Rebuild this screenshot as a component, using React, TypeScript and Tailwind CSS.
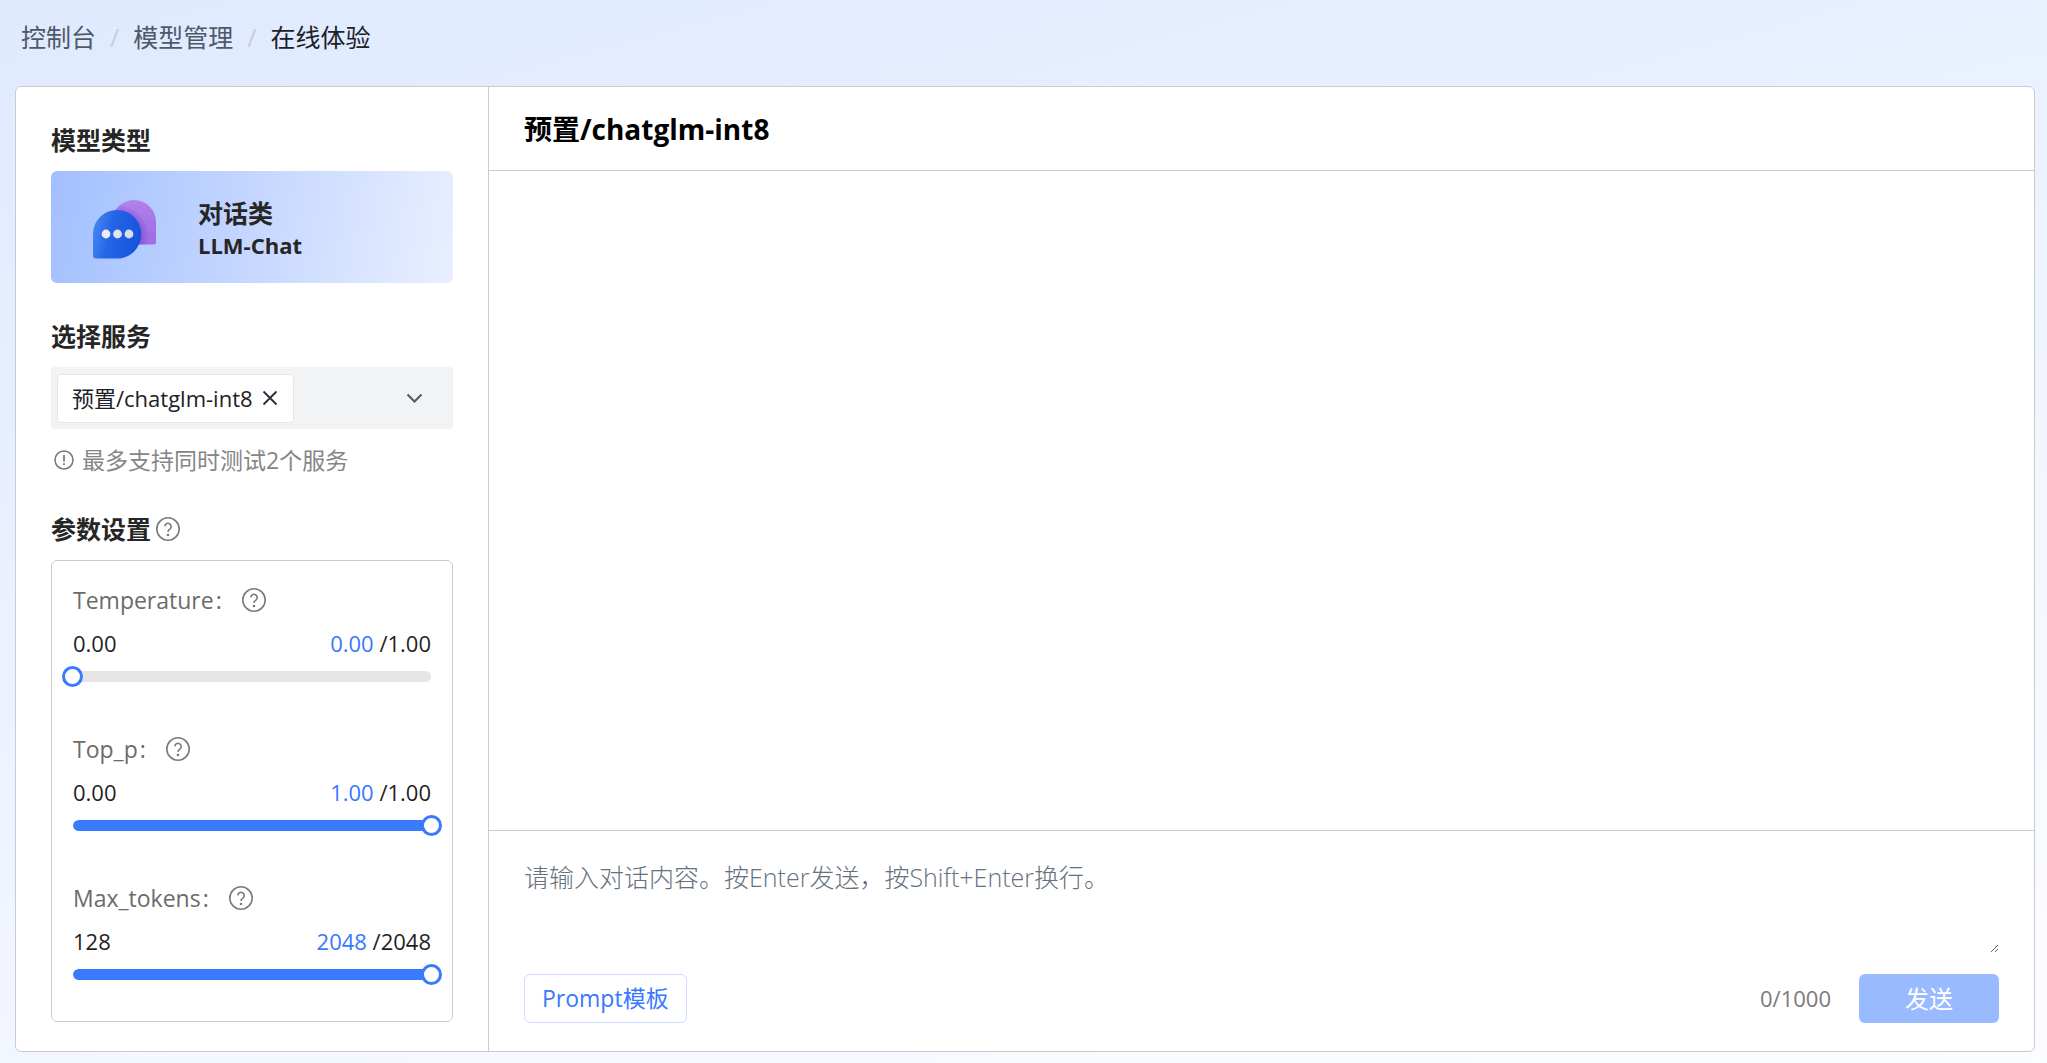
import { useState } from 'react';
import type { ReactNode } from 'react';

interface Param {
  id: string;
  label: string;
  min: number;
  max: number;
  step: number;
  digits: number;
  initial: number;
}

const params: Param[] = [
  { id: 'temperature', label: 'Temperature', min: 0, max: 1, step: 0.01, digits: 2, initial: 0 },
  { id: 'top_p', label: 'Top_p', min: 0, max: 1, step: 0.01, digits: 2, initial: 1 },
  { id: 'max_tokens', label: 'Max_tokens', min: 128, max: 2048, step: 1, digits: 0, initial: 2048 },
];

const MAX_LENGTH = 1000;

function HelpIcon() {
  return (
    <svg viewBox="0 0 24 24" className="h-6 w-6 shrink-0" fill="none" stroke="#7a7a7a">
      <circle cx="12" cy="12" r="11.2" strokeWidth="1.6" />
      <path d="M8.800 9.400a3.200 3.200 0 1 1 5.100 2.700c-1.200.8-1.900 1.300-1.900 2.800" strokeWidth="1.6" />
      <circle cx="12" cy="18" r="1.3" fill="#7a7a7a" stroke="none" />
    </svg>
  );
}

function InfoIcon() {
  return (
    <svg viewBox="0 0 20 20" className="h-5 w-5 shrink-0" fill="none" stroke="#7a7a7a">
      <circle cx="10" cy="10" r="9" strokeWidth="1.6" />
      <path d="M10 5v6.500" strokeWidth="1.8" />
      <path d="M10 13.200v1.800" strokeWidth="1.8" />
    </svg>
  );
}

function ChatIcon() {
  return (
    <svg viewBox="0 0 64 60" className="h-[60px] w-16 shrink-0">
      <defs>
        <linearGradient id="bubbleBack" x1="0" y1="0" x2="0.3" y2="1">
          <stop offset="0" stopColor="#b486ee" />
          <stop offset="1" stopColor="#a06ee4" />
        </linearGradient>
        <linearGradient id="bubbleFront" x1="0" y1="0.4" x2="1" y2="0.6">
          <stop offset="0" stopColor="#4586f2" />
          <stop offset="0.35" stopColor="#2466e6" />
          <stop offset="1" stopColor="#1453dc" />
        </linearGradient>
        <radialGradient id="bubbleShade" gradientUnits="userSpaceOnUse" cx="27" cy="36" r="30">
          <stop offset="0.75" stopColor="#6a35c4" stopOpacity="0.4" />
          <stop offset="1" stopColor="#6a35c4" stopOpacity="0" />
        </radialGradient>
      </defs>
      <path d="M42 1a22 22 0 0 1 22 22v20a2.500 2.500 0 0 1-2.500 2.500H42a22 22 0 0 1 0-44.500z" fill="url(#bubbleBack)" />
      <path d="M42 1a22 22 0 0 1 22 22v20a2.500 2.500 0 0 1-2.500 2.500H42a22 22 0 0 1 0-44.500z" fill="url(#bubbleShade)" />
      <path d="M25 11a24 24 0 1 1 0 48.500H4a3 3 0 0 1-3-3V35a24 24 0 0 1 24-24z" fill="url(#bubbleFront)" />
      <circle cx="14" cy="35" r="4.400" fill="#ececf2" />
      <circle cx="25.500" cy="35" r="4.400" fill="#e4e4ec" />
      <circle cx="37" cy="35" r="4.400" fill="#dcdfea" />
    </svg>
  );
}

function SectionTitle({ children, help }: { children: ReactNode; help?: boolean }) {
  return (
    <div className="mb-[15px] flex items-center gap-[5px]">
      <h2 className="text-[25px] leading-8 font-bold text-[#262626]">{children}</h2>
      {help && (
        <button type="button" aria-label="参数说明">
          <HelpIcon />
        </button>
      )}
    </div>
  );
}

function ParamSlider({ param }: { param: Param }) {
  const [value, setValue] = useState(param.initial);
  const percent = ((value - param.min) / (param.max - param.min)) * 100;

  return (
    <div>
      <div className="flex items-center gap-5">
        <label htmlFor={param.id} className="text-[23px] leading-8 text-[#6b6b6b]">
          {param.label}<span className="pl-0.5">:</span>
        </label>
        <button type="button" aria-label={`${param.label} 说明`}>
          <HelpIcon />
        </button>
      </div>
      <div className="mt-[11px] flex justify-between text-[22px] leading-8 text-[#1f1f1f]">
        <span>{param.min.toFixed(param.digits)}</span>
        <span>
          <span className="text-[#3878ff]">{value.toFixed(param.digits)}</span> /{param.max.toFixed(param.digits)}
        </span>
      </div>
      <div className="mt-[7px] grid items-center">
        <div className="col-start-1 row-start-1 h-[11px] overflow-hidden rounded-full bg-[#e5e5e5]">
          <div className="h-full rounded-full bg-[#3a7afc]" style={{ width: `${percent}%` }} />
        </div>
        <input
          id={param.id}
          type="range"
          min={param.min}
          max={param.max}
          step={param.step}
          value={value}
          onChange={(e) => setValue(Number(e.target.value))}
          className="col-start-1 row-start-1 -mx-[11px] h-[21px] cursor-pointer appearance-none bg-transparent [&::-webkit-slider-thumb]:h-[21px] [&::-webkit-slider-thumb]:w-[21px] [&::-webkit-slider-thumb]:appearance-none [&::-webkit-slider-thumb]:rounded-full [&::-webkit-slider-thumb]:border-3 [&::-webkit-slider-thumb]:border-[#3a7afc] [&::-webkit-slider-thumb]:bg-white"
        />
      </div>
    </div>
  );
}

function Sidebar() {
  const [services, setServices] = useState(['预置/chatglm-int8']);

  return (
    <aside className="w-[473px] shrink-0 border-r border-[#cbcbcb] px-[35px] pt-[37px] pb-7">
      <SectionTitle>模型类型</SectionTitle>
      <button
        type="button"
        className="flex h-28 w-full items-center gap-[42px] rounded-md bg-linear-100 from-[#a2bffe] to-[#e9efff] pt-[3px] pl-[41px] text-left text-[#262626]"
      >
        <ChatIcon />
        <span className="flex flex-col font-bold">
          <span className="text-[25px] leading-8">对话类</span>
          <span className="text-[22px] leading-8">LLM-Chat</span>
        </span>
      </button>

      <div className="mt-[37px]">
        <SectionTitle>选择服务</SectionTitle>
        <div className="flex h-[62px] items-center justify-between rounded-sm bg-[#f2f3f5] pr-7 pl-1.5">
          <div className="flex gap-1.5">
            {services.map((service) => (
              <span
                key={service}
                className="flex h-[49px] items-center gap-2 rounded-sm border border-[#e5e6eb] bg-white px-3.5 text-[22px] text-[#1d2129]"
              >
                {service}
                <button
                  type="button"
                  aria-label={`移除 ${service}`}
                  onClick={() => setServices(services.filter((s) => s !== service))}
                >
                  <svg viewBox="0 0 18 18" className="h-[18px] w-[18px]" stroke="#272e3b" strokeWidth="1.8">
                    <path d="M2.500 2.500l13 13M15.500 2.500l-13 13" />
                  </svg>
                </button>
              </span>
            ))}
          </div>
          <button type="button" aria-label="选择服务" aria-haspopup="listbox">
            <svg viewBox="0 0 20 20" className="h-5 w-5" fill="none" stroke="#4e5969" strokeWidth="2">
              <path d="M2.500 6.500L9.500 13.500L16.500 6.500" />
            </svg>
          </button>
        </div>
        <p className="mt-[15px] flex items-center gap-2 pl-[3px] text-[23px] leading-8 text-[#868686]">
          <InfoIcon />
          最多支持同时测试2个服务
        </p>
      </div>

      <div className="mt-[37px]">
        <SectionTitle help>参数设置</SectionTitle>
        <div className="flex flex-col gap-[46px] rounded-md border border-[#cbcbcb] px-[21px] pt-[23px] pb-9">
          {params.map((param) => (
            <ParamSlider key={param.id} param={param} />
          ))}
        </div>
      </div>
    </aside>
  );
}

function ChatPanel() {
  const [text, setText] = useState('');

  return (
    <main className="flex min-w-0 flex-1 flex-col">
      <header className="flex h-[84px] items-center border-b border-[#cbcbcb] px-[35px]">
        <h1 className="text-[28px] font-bold text-black">预置/chatglm-int8</h1>
      </header>
      <div className="flex-1" />
      <form
        className="border-t border-[#cbcbcb] px-[35px] pt-[30px] pb-7"
        onSubmit={(e) => e.preventDefault()}
      >
        <textarea
          aria-label="对话内容"
          maxLength={MAX_LENGTH}
          value={text}
          onChange={(e) => setText(e.target.value)}
          placeholder="请输入对话内容。按Enter发送，按Shift+Enter换行。"
          className="block h-[92px] w-full resize-y text-[25px] leading-8 font-light outline-none placeholder:text-[#66717e]"
        />
        <div className="mt-[21px] flex items-center justify-between">
          <button
            type="button"
            className="h-[49px] rounded-md border border-[#cddcff] bg-white px-[17px] text-[23px] text-[#3878ff]"
          >
            Prompt模板
          </button>
          <div className="flex items-center gap-7">
            <span className="text-[22px] text-[#7a7a7a]">
              {text.length}/{MAX_LENGTH}
            </span>
            <button
              type="submit"
              disabled={text.length === 0}
              className="h-[49px] w-[140px] rounded-md bg-[#3a7afc] text-2xl text-white disabled:bg-[#9abaff]"
            >
              发送
            </button>
          </div>
        </div>
      </form>
    </main>
  );
}

export default function App() {
  return (
    <div className="flex min-h-screen flex-col bg-linear-165 from-[#dfeaff] to-[#fcfdff] pr-3 pb-[11px] pl-[15px] font-['Open_Sans','Noto_Sans_CJK_SC',sans-serif]">
      <nav aria-label="面包屑" className="flex h-[86px] items-start gap-3.5 pt-[21px] pl-1.5 text-[25px] leading-8">
        <a href="#" className="text-[#4e5969]">控制台</a>
        <span className="text-[#c9cdd4]">/</span>
        <a href="#" className="text-[#4e5969]">模型管理</a>
        <span className="text-[#c9cdd4]">/</span>
        <span aria-current="page" className="text-[#1d2129]">在线体验</span>
      </nav>
      <div className="flex flex-1 rounded-md border border-[#cbcbcb] bg-white">
        <Sidebar />
        <ChatPanel />
      </div>
    </div>
  );
}
